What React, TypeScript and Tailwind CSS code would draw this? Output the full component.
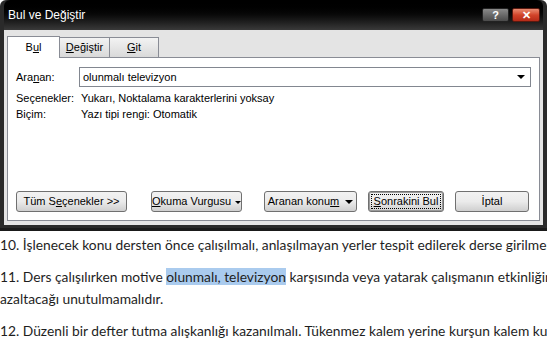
const ui = { fontFamily: "Tahoma, 'Liberation Sans', Arial, sans-serif" };
const doc = { fontFamily: "Lato, 'Open Sans', 'Liberation Sans', sans-serif" };

function Btn({ children, width, focused = false }: { children: React.ReactNode; width: string; focused?: boolean }) {
  return (
    <button
      className={`flex h-[21px] ${width} items-center justify-center whitespace-nowrap rounded-[3px] border border-[#707070] bg-gradient-to-b from-[#f2f2f2] via-[#ebebeb] to-[#cfcfcf] text-[11px] text-black ${focused ? "shadow-[inset_0_0_0_1px_#9a9a9a]" : ""}`}
    >
      {focused ? <span className="border border-dotted border-black px-[2px] leading-[13px]">{children}</span> : <span>{children}</span>}
    </button>
  );
}

function Caret({ size = "small" }: { size?: "small" | "large" }) {
  return (
    <span
      className={
        size === "small"
          ? "ml-[4px] inline-block h-0 w-0 border-x-[3px] border-t-[3px] border-x-transparent border-t-black align-middle"
          : "ml-[6px] inline-block h-0 w-0 border-x-[4px] border-t-[4px] border-x-transparent border-t-black align-middle"
      }
    />
  );
}

export default function App() {
  return (
    <div className="h-[343px] w-[547px] overflow-hidden bg-white">
      <div className="rounded-t-[6px] bg-[#2a2a2a] px-[4px] pb-[3px]" style={ui}>
        <div className="flex h-[30px] items-center justify-between rounded-t-[6px] bg-gradient-to-b from-[#000000] via-[#0a0a0a] to-[#3a3a3a] pl-[4px] pr-[3px]">
          <span className="text-[12px] text-white">Bul ve Değiştir</span>
          <div className="flex gap-[3px]">
            <div className="flex h-[14px] w-[27px] items-center justify-center rounded-[2px] border border-[#222] bg-gradient-to-b from-[#8a8a8a] to-[#4b4b4b] text-[11px] font-bold leading-none text-white">?</div>
            <div className="flex h-[14px] w-[28px] items-center justify-center rounded-[2px] border border-[#5a1a10] bg-gradient-to-b from-[#e88a70] via-[#d2442a] to-[#b52a18] text-[11px] font-bold leading-none text-white">✕</div>
          </div>
        </div>
        <div className="bg-[#e4e4e4] px-[3px] pb-[4px] pt-[5px]">
          <div className="flex h-[22px] items-end">
            <div className="relative z-10 -mb-px flex h-[22px] w-[53px] items-center justify-center border border-b-0 border-[#898c95] bg-white text-[11px]">
              <span>
                B<span className="underline">u</span>l
              </span>
            </div>
            <div className="flex h-[20px] w-[50px] items-center justify-center border border-l-0 border-b-0 border-[#898c95] bg-gradient-to-b from-[#f3f3f3] to-[#d9d9d9] text-[11px]">
              <span>
                <span className="underline">D</span>eğiştir
              </span>
            </div>
            <div className="flex h-[20px] w-[49px] items-center justify-center border border-l-0 border-b-0 border-[#898c95] bg-gradient-to-b from-[#f3f3f3] to-[#d9d9d9] text-[11px]">
              <span>
                <span className="underline">G</span>it
              </span>
            </div>
          </div>
          <div className="flex h-[164px] flex-col border border-[#898c95] bg-white px-[8px] pt-[9px] text-[11px] text-black">
            <div className="flex items-center">
              <span className="w-[63px]">
                Ara<span className="underline">n</span>an:
              </span>
              <div className="flex h-[20px] flex-1 items-center justify-between border border-[#828790] pl-[3px] pr-[5px]">
                <span>olunmalı televizyon</span>
                <span className="h-0 w-0 border-x-[4px] border-t-[4px] border-x-transparent border-t-black" />
              </div>
            </div>
            <div className="mt-[3px] flex h-[16px] items-center">
              <span className="w-[65px]">Seçenekler:</span>
              <span>Yukarı, Noktalama karakterlerini yoksay</span>
            </div>
            <div className="flex h-[16px] items-center">
              <span className="w-[65px]">Biçim:</span>
              <span>Yazı tipi rengi: Otomatik</span>
            </div>
            <div className="mb-[8px] mt-auto flex items-center">
              <Btn width="w-[111px]">
                Tüm S<span className="underline">e</span>çenekler &gt;&gt;
              </Btn>
              <div className="ml-[24px]">
                <Btn width="w-[91px]">
                  <span className="underline">O</span>kuma Vurgusu
                  <Caret />
                </Btn>
              </div>
              <div className="ml-[22px]">
                <Btn width="w-[93px]">
                  Aranan konu<span className="underline">m</span>
                  <Caret size="large" />
                </Btn>
              </div>
              <div className="ml-[11px]">
                <Btn width="w-[76px]" focused>
                  <span className="underline">S</span>onrakini Bul
                </Btn>
              </div>
              <div className="ml-[11px]">
                <Btn width="w-[74px]">İptal</Btn>
              </div>
            </div>
          </div>
        </div>
      </div>
      <div className="h-[3px] bg-[#1a1a1a]" />
      <div className="whitespace-nowrap pt-[3px] text-[13.8px] leading-[22px] text-[#1e1e1e]" style={doc}>
        <p>10. İşlenecek konu dersten önce çalışılmalı, anlaşılmayan yerler tespit edilerek derse girilmeli</p>
        <p className="mt-[10px]">
          11. Ders çalışılırken motive <span className="bg-[#aacbee]">olunmalı, televizyon</span> karşısında veya yatarak çalışmanın etkinliğini
        </p>
        <p>azaltacağı unutulmamalıdır.</p>
        <p className="mt-[10px]">12. Düzenli bir defter tutma alışkanlığı kazanılmalı. Tükenmez kalem yerine kurşun kalem kullanılmalı</p>
      </div>
    </div>
  );
}
